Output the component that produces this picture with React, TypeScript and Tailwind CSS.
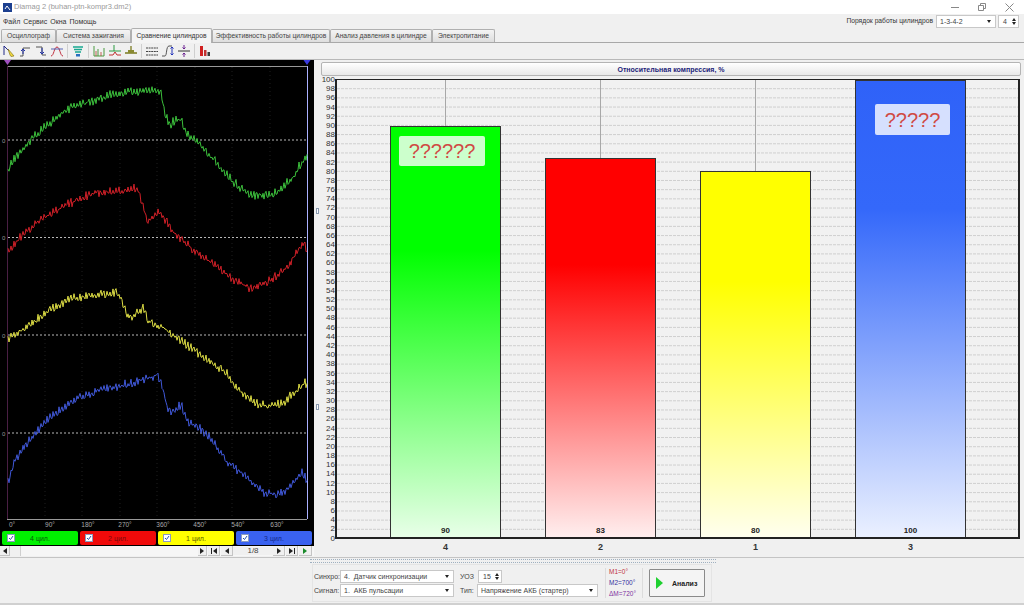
import React from "react";

type P = [number, number];

const green: P[] = [[8,173],[12,162],[20,153],[33,138],[50,123],[70,108],[90,102],[110,95],[133,92],[157,90],[160,92],[162,97],[165,115],[170,125],[175,120],[181,120],[187,135],[200,145],[220,167],[233,182],[250,195],[273,195],[293,178],[300,165],[307,155]];
const red: P[] = [[8,252],[20,238],[40,220],[67,205],[93,193],[117,192],[138,188],[142,203],[148,222],[160,212],[173,232],[190,247],[207,260],[233,280],[250,288],[267,283],[287,268],[303,243],[307,250]];
const yellow: P[] = [[8,340],[27,327],[50,310],[73,298],[100,295],[117,292],[122,300],[127,315],[133,318],[143,307],[148,322],[163,328],[187,345],[203,357],[227,373],[233,385],[253,402],[267,407],[283,403],[305,383],[307,385]];
const blue: P[] = [[8,482],[15,460],[33,435],[50,418],[80,397],[110,388],[133,383],[158,375],[163,390],[168,410],[173,412],[181,405],[188,422],[200,428],[213,442],[227,462],[243,475],[263,492],[275,495],[287,490],[302,473],[307,480]];

function wave(points: P[], seed: number, amp: number): string {
  let s = seed;
  const rnd = () => {
    s = (s * 1664525 + 1013904223) % 4294967296;
    return s / 4294967296;
  };
  const out: string[] = [];
  let seg = 0;
  let i = 0;
  for (let x = points[0][0]; x <= points[points.length - 1][0]; x += 1) {
    while (seg < points.length - 2 && x > points[seg + 1][0]) seg++;
    const [x0, y0] = points[seg];
    const [x1, y1] = points[seg + 1];
    const y = y0 + ((y1 - y0) * (x - x0)) / (x1 - x0);
    const zig = i % 3 === 0 ? -1.3 : i % 3 === 1 ? 1 : 0.1;
    const n = zig * amp + (rnd() - 0.5) * amp * 2.4;
    out.push(`${x.toFixed(1)},${(y + n).toFixed(1)}`);
    i++;
  }
  return out.join(" ");
}

function Icon({ children }: { children: React.ReactNode }) {
  return (
    <svg width="14" height="14" viewBox="0 0 14 14" className="shrink-0" fill="none" strokeWidth="1">
      {children}
    </svg>
  );
}

function Sep() {
  return <div className="mx-px h-[14px] w-px shrink-0 bg-[#cfcfcf]" />;
}

function Toolbar() {
  return (
    <div className="flex h-[16px] items-center gap-[2px] bg-[#f0f0f0] pl-[2px]">
      <Icon>
        <path d="M2 2v9M2 2l5 5" stroke="#222a88" />
        <path d="M6 5l6 7-3 .5-1-1.500z" fill="#f0d840" stroke="#8a7a20" strokeWidth=".7" />
      </Icon>
      <Icon>
        <path d="M2 12h3V4h7" stroke="#555" />
        <path d="M5 10V5M3 7l2-2 2 2" stroke="#2233aa" />
      </Icon>
      <Icon>
        <path d="M2 3h6v8h4" stroke="#555" />
        <path d="M8 4v6M6 8l2 2 2-2" stroke="#2233aa" />
      </Icon>
      <Icon>
        <path d="M1 12c3 0 3-9 6-9s3 9 6 9" stroke="#c03040" />
        <path d="M1 5h12" stroke="#3344aa" strokeWidth=".8" />
      </Icon>
      <Sep />
      <Icon>
        <path d="M2 3h10M3 5.500h8M4 8h6" stroke="#18a890" strokeWidth="1.400" />
        <path d="M5 10h4v2.500H5z" fill="#2a70c0" />
      </Icon>
      <Sep />
      <Icon>
        <path d="M2 2v10h4V5M6 12h6V4" stroke="#4a9a40" />
        <path d="M4 12V7M9 12V8" stroke="#b04030" strokeWidth=".8" />
      </Icon>
      <Icon>
        <path d="M1 7h12M6 1v6" stroke="#2a9a40" />
        <path d="M1 11h4l2-3 2 3h4" stroke="#c03030" />
      </Icon>
      <Icon>
        <path d="M1 9h12M7 2v7" stroke="#7a7a20" strokeWidth="1.300" />
        <path d="M4 6h6v3H4z" fill="#8a8a30" />
      </Icon>
      <Sep />
      <Icon>
        <path d="M1 4h12M1 7.500h12M1 11h12" stroke="#444" strokeDasharray="2 .6" />
      </Icon>
      <Icon>
        <path d="M1 12h3c2 0 1-10 4-10h3" stroke="#555" />
        <path d="M11 3v8M9.500 4.500L11 3l1.500 1.500M9.500 9.500L11 11l1.500-1.500" stroke="#2233bb" />
      </Icon>
      <Icon>
        <path d="M1 7h12" stroke="#333" />
        <path d="M7 1v4M5.500 3.500L7 5l1.500-1.500M7 13V9M5.500 10.500L7 9l1.500 1.500" stroke="#6a2090" />
      </Icon>
      <Sep />
      <Icon>
        <path d="M2 2h3v10H2z" fill="#d02020" />
        <path d="M6 6h2.500v6H6z" fill="#c03030" />
        <path d="M9.500 8H12v4H9.500z" fill="#3a3a3a" />
      </Icon>
    </div>
  );
}

const tabs = [
  ["Осциллограф", "w-[55px]"],
  ["Система зажигания", "w-[75px]"],
  ["Сравнение цилиндров", "w-[81px]"],
  ["Эффективность работы цилиндров", "w-[118px]"],
  ["Анализ давления в цилиндре", "w-[102px]"],
  ["Электропитание", "w-[63px]"],
];

function Tabs() {
  return (
    <div className="flex h-[14px] items-end border-b border-[#a8a8a8] pl-px text-[6.7px]">
      {tabs.map(([t, w], i) =>
        i === 2 ? (
          <div key={t} className={`${w} relative z-10 -mb-px flex h-[15px] items-center justify-center whitespace-nowrap rounded-t-[2px] border border-b-0 border-[#b0b0b0] bg-[#f4f4f4] text-[#333]`}>
            {t}
          </div>
        ) : (
          <div key={t} className={`${w} flex h-[13px] items-center justify-center whitespace-nowrap rounded-t-[2px] border border-b-0 border-[#b0b0b0] bg-gradient-to-b from-[#f4f4f4] to-[#dedede] text-[#444]`}>
            {t}
          </div>
        ),
      )}
    </div>
  );
}

function Combo({ text, className }: { text: string; className: string }) {
  return (
    <div className={`${className} flex h-[13px] items-center justify-between whitespace-pre border border-[#c8c8c8] bg-white pl-[3px] pr-[4px] text-[#444]`}>
      <span>{text}</span>
      <span className="h-0 w-0 border-x-[2.5px] border-t-[3px] border-x-transparent border-t-[#222]" />
    </div>
  );
}

function Spin({ text, className }: { text: string; className: string }) {
  return (
    <div className={`${className} flex h-[13px] items-center justify-between border border-[#c8c8c8] bg-white pl-[4px] pr-[2px] text-[#444]`}>
      <span>{text}</span>
      <span className="flex flex-col gap-px">
        <span className="h-0 w-0 border-x-[2.5px] border-b-[3px] border-x-transparent border-b-[#222]" />
        <span className="h-0 w-0 border-x-[2.5px] border-t-[3px] border-x-transparent border-t-[#222]" />
      </span>
    </div>
  );
}

function Scope() {
  const hl = [140, 237.5, 335, 433];
  const vl = [45, 82, 120, 157, 195, 232, 270];
  const deg = [["0°", 12], ["90°", 50], ["180°", 88], ["270°", 125], ["360°", 163], ["450°", 200], ["540°", 238], ["630°", 277]] as const;
  return (
    <div className="h-[471px] w-[314px] bg-black">
      <svg width="314" height="471" viewBox="0 60 314 471" className="block">
        {vl.map((x) => (
          <line key={x} x1={x} x2={x} y1="67" y2="519" stroke="#1e1e1e" strokeDasharray="1 3" />
        ))}
        <path d="M7 66.500H307" stroke="#999" />
        <path d="M7.500 66V519" stroke="#4a1f44" />
        <path d="M307.500 66V519" stroke="#aab0ff" />
        <path d="M7 519.500H307" stroke="#999" />
        <path d="M4 60h7l-3.500 5z" fill="#a050c0" />
        <path d="M303.500 60h7l-3.500 5z" fill="#3a3ae0" />
        {hl.map((y) => (
          <React.Fragment key={y}>
            <line x1="8" x2="307" y1={y} y2={y} stroke="#b8b8b8" strokeDasharray="2 2" />
            <text x="2" y={y + 2.500} fontSize="6" fill="#999">0</text>
          </React.Fragment>
        ))}
        <g className="blur-[0.3px]">
          <polyline points={wave(green, 11, 2)} fill="none" stroke="#3cc03c" strokeWidth="1" />
          <polyline points={wave(red, 23, 2)} fill="none" stroke="#d02028" strokeWidth="1" />
          <polyline points={wave(yellow, 37, 2)} fill="none" stroke="#dcdc44" strokeWidth="1" />
          <polyline points={wave(blue, 51, 2)} fill="none" stroke="#4058d8" strokeWidth="1" />
        </g>
        {deg.map(([t, x]) => (
          <text key={t} x={x} y="527" fontSize="6.500" fill="#aaa" textAnchor="middle">{t}</text>
        ))}
      </svg>
    </div>
  );
}

const chips = [
  ["4 цил.", "bg-[#00f000]", "text-[#0a5a0a]"],
  ["2 цил.", "bg-[#f00a0a]", "text-[#7a0a0a]"],
  ["1 цил.", "bg-[#ffff00]", "text-[#5a5a00]"],
  ["3 цил.", "bg-[#3a62f0]", "text-[#14288a]"],
];

function Chips() {
  return (
    <div className="flex h-[15px] gap-[2px] bg-black px-[2px]">
      {chips.map(([t, bg, fg]) => (
        <div key={t} className={`${bg} relative flex h-[14px] w-[76px] items-center justify-center rounded-[2px]`}>
          <span className={`${fg}`}>{t}</span>
          <span className="absolute left-[5px] top-[3px] flex h-[8px] w-[8px] items-center justify-center border border-[#8a9ac0] bg-white">
            <svg width="6" height="6" viewBox="0 0 6 6"><path d="M1 3l1.500 1.500L5 1" stroke="#2a52b0" fill="none" /></svg>
          </span>
        </div>
      ))}
    </div>
  );
}

function Tri({ dir = "r", c = "#222" }: { dir?: "r" | "l"; c?: string }) {
  return dir === "r" ? (
    <span className="h-0 w-0 border-y-[3px] border-l-[4px] border-y-transparent" style={{ borderLeftColor: c }} />
  ) : (
    <span className="h-0 w-0 border-y-[3px] border-r-[4px] border-y-transparent" style={{ borderRightColor: c }} />
  );
}

function Btn({ w, children }: { w: string; children: React.ReactNode }) {
  return (
    <div className={`${w} flex h-[10px] items-center justify-center gap-px border-b border-r border-[#c4c4c4] bg-[#f0f0f0]`}>{children}</div>
  );
}

function Pager() {
  return (
    <div className="flex h-[10px] items-center bg-[#f6f6f6]">
      <Btn w="w-[10px]"><Tri dir="l" /></Btn>
      <div className="h-[10px] w-[11px] border-r border-[#cfcfcf] bg-[#f0f0f0]" />
      <div className="w-[177px]" />
      <Btn w="w-[9px]"><Tri /></Btn>
      <div className="w-[1px]" />
      <Btn w="w-[12px]"><span className="h-[6px] w-px bg-[#222]" /><Tri dir="l" /></Btn>
      <div className="w-px" />
      <Btn w="w-[12px]"><Tri dir="l" /></Btn>
      <div className="flex w-[40px] items-center justify-center bg-[#f0f0f0] text-[8px] text-[#444]">1/8</div>
      <Btn w="w-[12px]"><Tri /></Btn>
      <div className="w-px" />
      <Btn w="w-[12px]"><Tri /><span className="h-[6px] w-px bg-[#222]" /></Btn>
      <div className="w-px" />
      <Btn w="w-[13px]"><Tri c="#1a8a2a" /></Btn>
    </div>
  );
}

const ticks: number[] = [];
for (let v = 100; v >= 0; v -= 2) ticks.push(v);

const bars = [
  { id: "4", v: 90, bg: "bg-[linear-gradient(to_bottom,#00ff00_0%,#00ff00_30%,#e8ffe8_100%)]", note: "??????", noteBox: "left-[8px] top-[9px] h-[30px] w-[86px]" },
  { id: "2", v: 83, bg: "bg-[linear-gradient(to_bottom,#ff0000_0%,#ff0000_28%,#ffeeee_100%)]", note: "", noteBox: "" },
  { id: "1", v: 80, bg: "bg-[linear-gradient(to_bottom,#ffff00_0%,#ffff00_30%,#ffffee_100%)]", note: "", noteBox: "" },
  { id: "3", v: 100, bg: "bg-[linear-gradient(to_bottom,#2f62f8_0%,#3468fa_28%,#eaf0ff_100%)]", note: "?????", noteBox: "left-[19px] top-[23px] h-[31px] w-[75px]" },
];

function Chart() {
  return (
    <div className="flex h-[480px]">
      <div className="flex h-[460px] w-[14px] shrink-0 flex-col justify-between pt-px text-[8px] text-[#333]">
        {ticks.map((t) => (
          <div key={t} className="flex h-0 items-center justify-end">{t}</div>
        ))}
      </div>
      <div className="flex w-[685px] flex-col">
        <div className="relative h-[460px] border-b-2 border-l-2 border-r-2 border-t border-[#222] bg-[#f1f1f1]">
          <svg className="absolute left-0 top-0" width="681" height="457" viewBox="0 0 681 457">
            {ticks.slice(1, -1).map((t) => (
              <line key={t} x1="0" x2="681" y1={(100 - t) * 4.590 - 0.500} y2={(100 - t) * 4.590 - 0.500} stroke="#cfcfcf" strokeDasharray="3 1" />
            ))}
            {[108.500, 263.500, 418.500, 573.500].map((x) => (
              <line key={x} x1={x} x2={x} y1="0" y2="457" stroke="#a8a8a8" />
            ))}
          </svg>
          <div className="absolute inset-0 grid grid-cols-4 pl-[31px] pr-[30px]">
            {bars.map((b) => (
              <div key={b.id} className="flex items-end justify-center">
                <div className={`${b.bg} relative flex w-[111px] items-end justify-center border border-b-0 border-[#333] pb-[2px] text-[8px] font-bold text-[#222]`} style={{ height: `${b.v}%` }}>
                  {b.v}
                  {b.note && (
                    <div className={`${b.noteBox} absolute flex items-center justify-center rounded-[2px] bg-white/80 text-[20px] font-normal text-[#d04a44]`}>
                      {b.note}
                    </div>
                  )}
                </div>
              </div>
            ))}
          </div>
        </div>
        <div className="grid grid-cols-4 pl-[33px] pr-[32px] pt-[4px] text-[9px] font-bold text-[#333]">
          {bars.map((b) => (
            <div key={b.id} className="text-center">{b.id}</div>
          ))}
        </div>
      </div>
    </div>
  );
}

export default function App() {
  return (
    <div className="flex h-[605px] w-[1024px] flex-col overflow-hidden bg-[#f0f0f0] font-['Liberation_Sans',Arial,sans-serif] text-[7px] leading-none">
      <div className="flex h-[14px] items-center bg-white pl-[3px] pr-[10px]">
        <svg width="9" height="9" viewBox="0 0 9 9" className="shrink-0"><rect width="9" height="9" fill="#1c3f8f" /><path d="M2 6l2-3 3 4" stroke="#fff" fill="none" /></svg>
        <span className="ml-[2px] text-[7.5px] text-[#9a9a9a]">Diamag 2 (buhan-ptn-kompr3.dm2)</span>
        <div className="ml-auto flex items-center gap-[19px]">
          <svg width="8" height="8" viewBox="0 0 8 8"><path d="M0 4.500h8" stroke="#888" /></svg>
          <svg width="8" height="8" viewBox="0 0 8 8"><path d="M.500 2.500h5v5h-5zM2.500 2V.500h5v5H6" stroke="#888" fill="none" /></svg>
          <svg width="9" height="9" viewBox="0 0 9 9"><path d="M.500.500l8 8M8.500.500l-8 8" stroke="#888" /></svg>
        </div>
      </div>
      <div className="flex h-[15px] items-center pl-[3px] pr-[5px]">
        <div className="flex gap-[3px] text-[#333]">
          <span>Файл</span>
          <span>Сервис</span>
          <span>Окна</span>
          <span>Помощь</span>
        </div>
        <div className="ml-auto flex items-center">
          <span className="mr-[3px] text-[6.7px] text-[#333]">Порядок работы цилиндров</span>
          <Combo text="1-3-4-2" className="w-[60px]" />
          <Spin text="4" className="ml-[2px] w-[21px]" />
        </div>
      </div>
      <Tabs />
      <Toolbar />
      <div className="h-px bg-[#b8b8b8]" />
      <div className="flex h-[497px]">
        <div className="w-[314px] shrink-0">
          <Scope />
          <Chips />
          <Pager />
        </div>
        <div className="flex w-[6px] shrink-0 flex-col items-center justify-center gap-[190px]">
          <span className="h-[6px] w-[3px] border border-[#8a9ab0] bg-white" />
          <span className="h-[6px] w-[3px] border border-[#8a9ab0] bg-white" />
        </div>
        <div className="flex-1 pl-px pr-[3px] pt-[2px]">
          <div className="flex h-[14px] items-center justify-center rounded-[2px] border border-[#b4b4b4] bg-gradient-to-b from-white to-[#e8e8e8] font-bold text-[#1c1c78]">
            Относительная компрессия, %
          </div>
          <div className="pt-[3px]">
            <Chart />
          </div>
        </div>
      </div>
      <div className="flex flex-1 flex-col border-t border-[#c4c4c4] border-b-2 border-b-[#d0d0d0]">
        <div className="ml-[310px] mt-px h-[4px] w-[406px] border-y border-dotted border-[#9fb0c0]" />
        <div className="ml-[312px] mt-[1px] flex h-[38px] w-[400px] items-center border border-[#e4e4e4] text-[#444]">
          <div className="flex flex-col gap-px pl-[1px]">
            <div className="flex items-center">
              <span className="w-[26px]">Синхро:</span>
              <Combo text="4.  Датчик синхронизации" className="w-[114px]" />
            </div>
            <div className="flex items-center">
              <span className="w-[26px]">Сигнал:</span>
              <Combo text="1.  АКБ пульсации" className="w-[114px]" />
            </div>
          </div>
          <div className="ml-[6px] flex flex-col gap-px">
            <div className="flex items-center">
              <span className="w-[18px]">УОЗ</span>
              <Spin text="15" className="w-[24px]" />
            </div>
            <div className="flex items-center">
              <span className="w-[17px]">Тип:</span>
              <Combo text="Напряжение АКБ (стартер)" className="w-[121px]" />
            </div>
          </div>
          <div className="ml-[7px] flex h-[30px] w-[38px] flex-col justify-between border-x border-[#dcdcdc] px-[3px] py-[1px] text-[6.5px]">
            <span className="text-[#c03040]">M1=0°</span>
            <span className="text-[#3030a0]">M2=700°</span>
            <span className="text-[#8030a0]">ΔM=720°</span>
          </div>
          <div className="ml-[6px] flex h-[28px] w-[56px] items-center rounded-[1px] border border-[#8a8a8a] bg-[#f4f4f4] pl-[6px] font-bold text-[#222]">
            <span className="h-0 w-0 border-y-[6px] border-l-[7px] border-y-transparent border-l-[#1fd030]" />
            <span className="ml-[9px]">Анализ</span>
          </div>
        </div>
      </div>
    </div>
  );
}
